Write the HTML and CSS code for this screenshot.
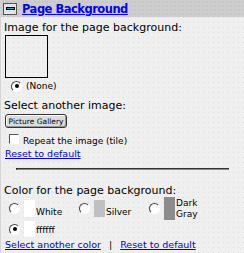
FILE: index.html
```html
<!DOCTYPE html>
<html lang="en">
<head>
    <meta charset="UTF-8">
    <title>Page Background</title>
    <link rel="stylesheet" href="styles.css">
</head>
<body>
    <div class="panel">
        <div class="head">
            <span class="toggle"><span class="bar"></span></span>
            <a class="title" href="#">Page Background</a>
        </div>
        <div class="body">
            <div class="label">Image for the page background:</div>
            <div class="preview"></div>
            <div class="none-row"><span class="radio on"></span>(None)</div>
            <div class="label second">Select another image:</div>
            <button class="gallery">Picture Gallery</button>
            <div class="tile-row"><span class="check"></span>Repeat the image (tile)</div>
            <a class="link" href="#">Reset to default</a>
            <div class="rule"></div>
            <div class="label">Color for the page background:</div>
            <div class="colors">
                <div class="opt"><span class="radio"></span><span class="swatch white"></span><span class="name">White</span></div>
                <div class="opt"><span class="radio"></span><span class="swatch silver"></span><span class="name">Silver</span></div>
                <div class="opt"><span class="radio"></span><span class="swatch gray tall"></span><span class="name">Dark<br>Gray</span></div>
                <div class="opt"><span class="radio on"></span><span class="swatch white"></span><span class="name">ffffff</span></div>
            </div>
            <div class="links">
                <a class="link" href="#">Select another color</a>
                <span class="sep">|</span>
                <a class="link" href="#">Reset to default</a>
            </div>
        </div>
    </div>
</body>
</html>
```

FILE: styles.css
```css
html {
    background-color: #efefef;
}

body {
    margin: 0;
    font-family: "DejaVu Sans", Verdana, sans-serif;
    color: #000;
}

.panel {
    width: 244px;
    height: 253px;
    overflow: hidden;
    background-color: #efefef;
    background-image: radial-gradient(#dcdcdc 0.6px, transparent 0.8px);
    background-size: 5px 5px;
    border-left: 1px solid #d4d4d4;
    box-sizing: border-box;
}

.head {
    height: 17px;
    display: flex;
    align-items: center;
    gap: 5px;
    padding-left: 2px;
    background-color: #cecece;
    background-image: radial-gradient(#bcbcbc 0.6px, transparent 0.8px);
    background-size: 4px 4px;
}

.toggle {
    width: 12px;
    height: 10px;
    border: 1px solid #555;
    background-color: #e4e4e4;
    display: flex;
    align-items: center;
    justify-content: center;
}

.bar {
    width: 7px;
    height: 1px;
    border: 1px solid #000;
    background-color: #2aa4c8;
}

.title {
    font-size: 11.5px;
    font-weight: bold;
    color: #0000ff;
    text-decoration: underline;
    letter-spacing: -0.5px;
}

.body {
    padding: 4px 0 0 3px;
}

.label {
    font-size: 11px;
    line-height: 13px;
    height: 13px;
}

.label.second {
    margin-top: 7px;
}

.preview {
    width: 41px;
    height: 41px;
    margin: 1px 0 0 1px;
    border: 1px solid #000;
}

.none-row {
    display: flex;
    align-items: center;
    gap: 4px;
    height: 12px;
    margin: 2px 0 0 7px;
    font-size: 9px;
}

.radio {
    width: 9px;
    height: 9px;
    border-radius: 50%;
    border: 1px solid;
    border-color: #444 #fff #fff #444;
    background-color: #fff;
    display: inline-flex;
    align-items: center;
    justify-content: center;
    flex: none;
}

.radio.on::after {
    content: "";
    width: 4px;
    height: 4px;
    border-radius: 50%;
    background-color: #000;
}

.gallery {
    display: block;
    margin: 2px 0 0 1px;
    width: 62px;
    height: 14px;
    padding: 0;
    font-family: "DejaVu Sans", Verdana, sans-serif;
    font-size: 7.5px;
    color: #000;
    background-color: #dcdcdc;
    border: 1px solid #333;
    border-radius: 3px;
    box-shadow: inset -1px -1px #999, inset 1px 1px #fff;
}

.tile-row {
    display: flex;
    align-items: flex-end;
    gap: 4px;
    height: 12px;
    margin: 6px 0 0 5px;
    font-size: 9px;
    line-height: 10px;
}

.check {
    width: 8px;
    height: 8px;
    border: 1px solid;
    border-color: #555 #fff #fff #555;
    background-color: #fff;
    margin-bottom: 2px;
}

.link {
    font-size: 9.5px;
    color: #0000ee;
    text-decoration: underline;
}

.body > .link {
    display: block;
    margin: 2px 0 0 1px;
    line-height: 11px;
}

.rule {
    margin: 9px 15px 14px 12px;
    height: 0;
    border-top: 1px solid #333;
    border-bottom: 1px solid #888;
    border-left: 1px solid #000;
}

.colors {
    display: grid;
    grid-template-columns: 70px 70px 1fr;
    align-items: center;
    row-gap: 1px;
    margin-left: 5px;
}

.opt {
    display: flex;
    align-items: center;
    height: 23px;
}

.opt:nth-child(4) {
    height: 16px;
}

.opt .radio {
    margin-right: 4px;
}

.swatch {
    width: 11px;
    height: 17px;
    flex: none;
}

.swatch.tall {
    height: 23px;
}

.opt:nth-child(4) .swatch {
    height: 16px;
}

.white {
    background-color: #fff;
}

.silver {
    background-color: #c0c0c0;
}

.gray {
    background-color: #8c8c8c;
}

.name {
    font-size: 9px;
    line-height: 11px;
    align-self: flex-end;
    margin: 0 0 2px 1px;
}

.opt:nth-child(3) .name {
    align-self: center;
    margin-bottom: 0;
}

.opt:nth-child(4) .name {
    margin-bottom: 1px;
}

.links {
    margin: 2px 0 0 1px;
    font-size: 9.5px;
    line-height: 11px;
}

.sep {
    margin: 0 5px;
}
```
